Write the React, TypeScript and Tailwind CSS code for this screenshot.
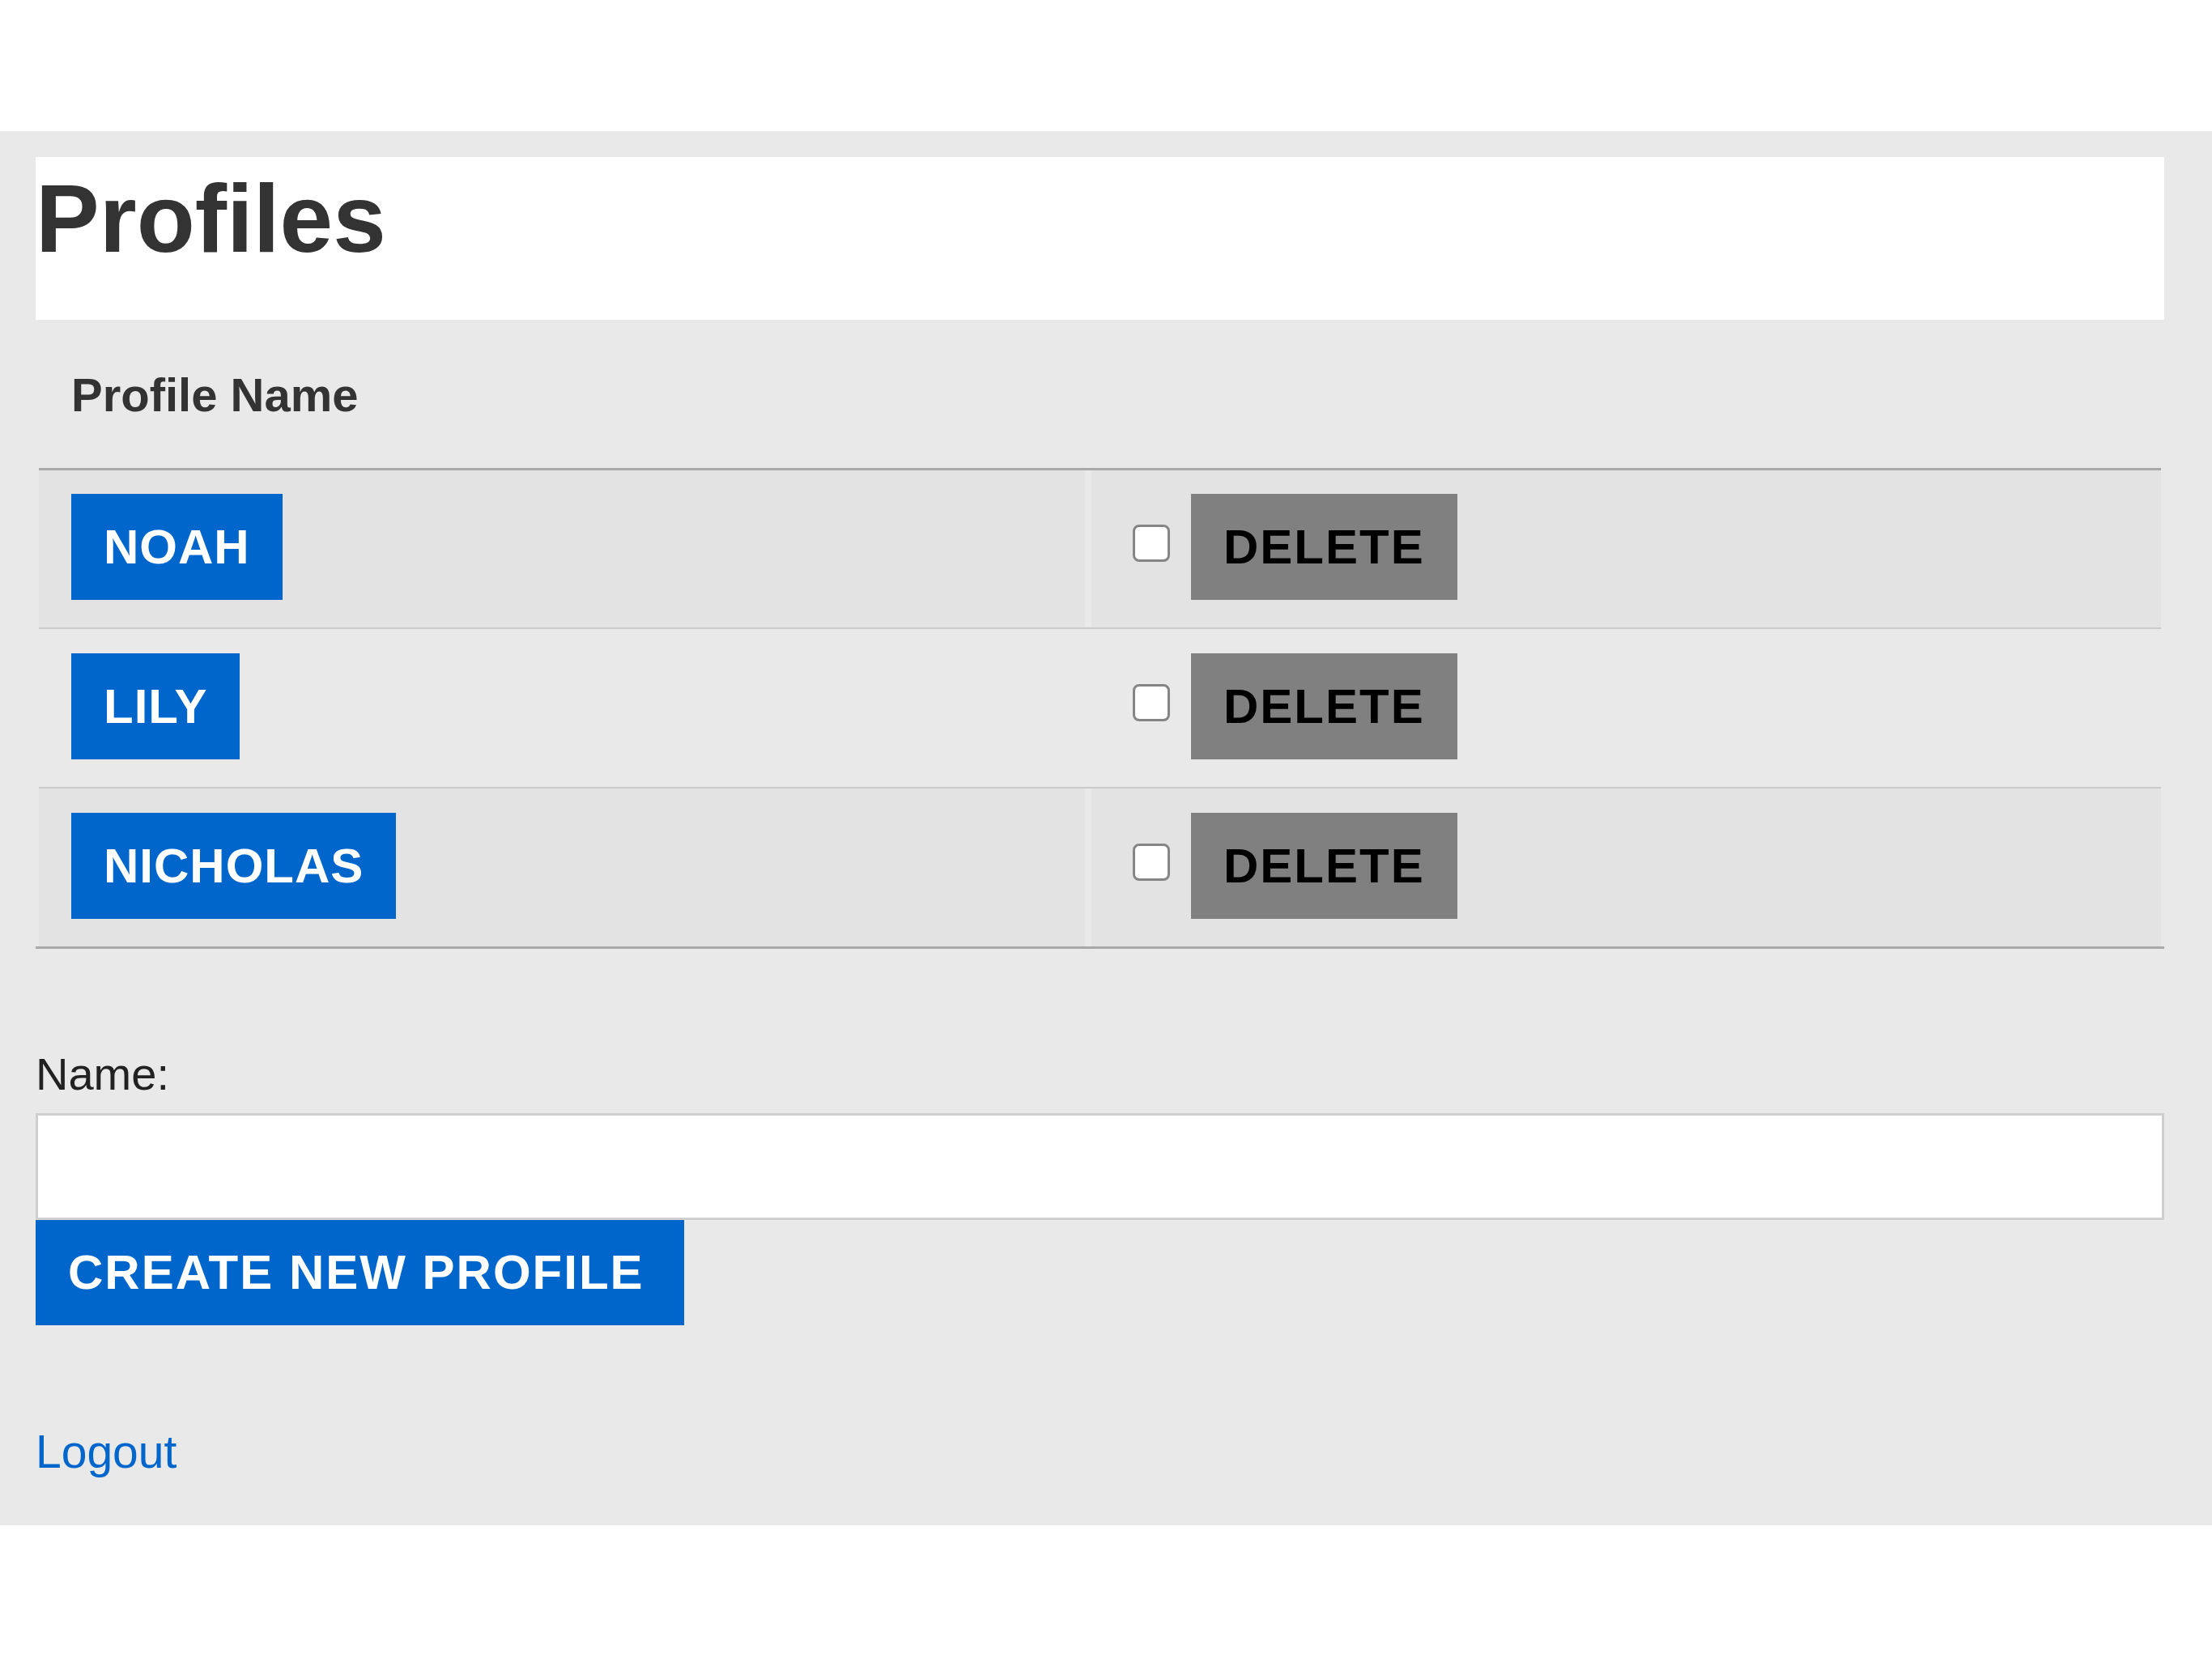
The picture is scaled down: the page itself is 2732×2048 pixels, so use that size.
import { useState } from "react";

const PROFILES = ["NOAH", "LILY", "NICHOLAS"];

function ProfileRow({ name, index }: { name: string; index: number }) {
  const [checked, setChecked] = useState(false);
  const shaded = index % 2 === 0;
  const cellBg = shaded ? "bg-[#e3e3e3]" : "bg-[#e9e9e9]";
  const border = index === 0 ? "border-t-[3px] border-[#a9a9a9]" : "border-t-2 border-[#cacaca]";
  const pad = index === 0 ? "pt-[29px] pb-[34px]" : "pt-[30px] pb-[34px]";

  return (
    <div className={`mx-[4px] flex gap-[8px] ${border}`}>
      <div className={`w-[1292px] shrink-0 pl-[40px] ${pad} ${cellBg}`}>
        <button
          type="button"
          className="flex h-[131px] items-center bg-[#0066cc] px-[40px] text-[60px] font-bold leading-none tracking-[1px] text-white"
        >
          {name}
        </button>
      </div>
      <div className={`flex flex-1 items-center pl-[51px] ${pad} ${cellBg}`}>
        <input
          type="checkbox"
          checked={checked}
          onChange={(e) => setChecked(e.target.checked)}
          className="mb-[10px] h-[46px] w-[46px] appearance-none rounded-[8px] border-[3px] border-[#858585] bg-white"
        />
        <button
          type="button"
          className="ml-[26px] flex h-[131px] items-center bg-[#808080] px-[40px] text-[60px] font-bold leading-none tracking-[2px] text-black"
        >
          DELETE
        </button>
      </div>
    </div>
  );
}

export default function App() {
  const [name, setName] = useState("");

  return (
    <div className="h-[2048px] bg-white pt-[162px]" style={{ fontFamily: '"Liberation Sans", Arial, sans-serif' }}>
      <main className="bg-[#e9e9e9] pb-[62px] pl-[44px] pr-[59px] pt-[32px]">
        <div className="h-[201px] bg-white pt-[17px]">
          <h1 className="text-[118px] font-bold leading-none text-[#333333]">Profiles</h1>
        </div>

        <div className="border-b-[3px] border-[#a9a9a9]">
          <div className="h-[183px] pl-[44px] pt-[64px] text-[58px] font-bold leading-none text-[#333333]">Profile Name</div>
          {PROFILES.map((p, i) => (
            <ProfileRow key={p} name={p} index={i} />
          ))}
        </div>

        <label className="mt-[127px] block text-[56px] leading-none text-[#222222]" htmlFor="profile-name">
          Name:
        </label>
        <input
          id="profile-name"
          value={name}
          onChange={(e) => setName(e.target.value)}
          className="mt-[20px] block h-[132px] w-full border-[3px] border-[#cfcfcf] bg-white px-4 text-[56px] outline-none"
        />
        <button
          type="button"
          className="flex h-[130px] w-[801px] items-center bg-[#0066cc] px-[40px] text-[60px] font-bold leading-none tracking-[2px] text-white"
        >
          CREATE NEW PROFILE
        </button>

        <a href="#" className="mt-[128px] block w-fit text-[57px] leading-none text-[#0066cc]">
          Logout
        </a>
      </main>
    </div>
  );
}
